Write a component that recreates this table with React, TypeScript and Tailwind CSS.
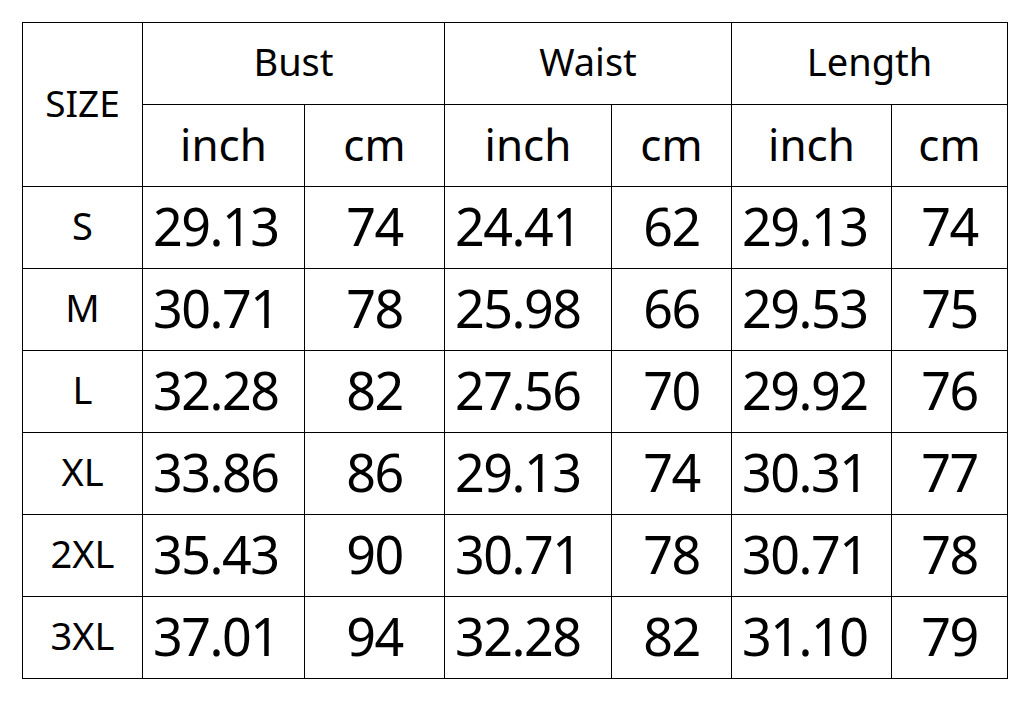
const rows = [
  ["S", "29.13", "74", "24.41", "62", "29.13", "74"],
  ["M", "30.71", "78", "25.98", "66", "29.53", "75"],
  ["L", "32.28", "82", "27.56", "70", "29.92", "76"],
  ["XL", "33.86", "86", "29.13", "74", "30.31", "77"],
  ["2XL", "35.43", "90", "30.71", "78", "30.71", "78"],
  ["3XL", "37.01", "94", "32.28", "82", "31.10", "79"],
];

const cell = "flex items-center border-r border-b border-black pb-[4px]";

export default function App() {
  return (
    <div className="w-[1035px] h-[701px] bg-white pt-[22px] pl-[22px]" style={{ fontFamily: '"Noto Sans", sans-serif' }}>
      <div className="grid grid-cols-[120px_162px_140px_167px_120px_160px_116px] grid-rows-[82px_82px_82px_82px_82px_82px_82px_82px] w-[986px] border-l border-t border-black text-black">
        <div className={`${cell} row-span-2 justify-center text-[37px]`}>SIZE</div>
        <div className={`${cell} col-span-2 justify-center text-[38px]`}>Bust</div>
        <div className={`${cell} col-span-2 justify-center text-[38px]`}>Waist</div>
        <div className={`${cell} col-span-2 justify-center text-[38px]`}>Length</div>
        {["inch", "cm", "inch", "cm", "inch", "cm"].map((h, i) => (
          <div key={i} className={`${cell} justify-center text-[44px]`}>{h}</div>
        ))}
        {rows.map((r) =>
          r.map((v, j) => (
            <div
              key={r[0] + j}
              className={`${cell} ${j === 0 ? "justify-center text-[38px]" : j % 2 === 1 ? "pl-[10px] text-[52px] tracking-[-1.5px]" : "justify-center text-[52px] tracking-[-1.5px]"}`}
            >
              {v}
            </div>
          ))
        )}
      </div>
    </div>
  );
}
